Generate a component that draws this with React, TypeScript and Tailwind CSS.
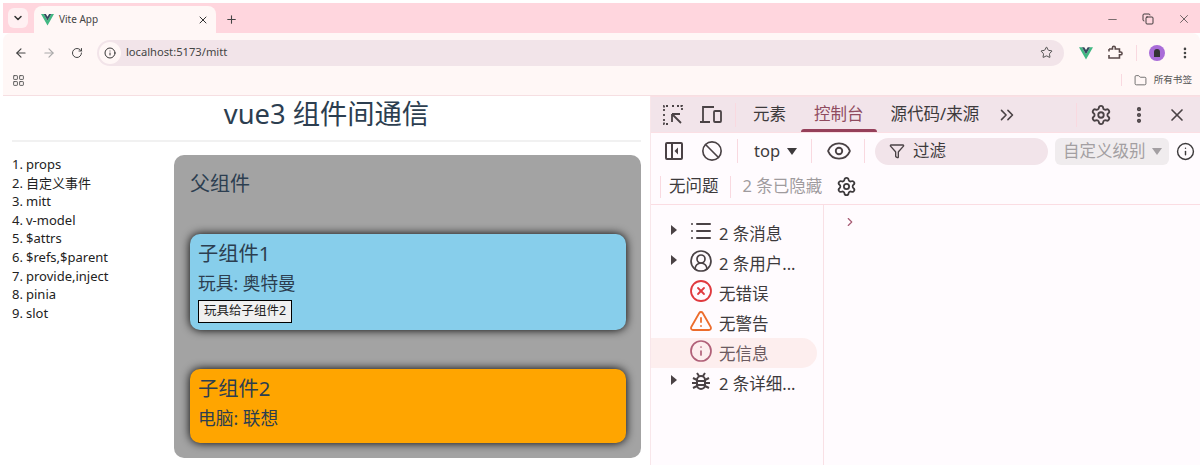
import {
  ArrowLeft,
  ArrowRight,
  Ban,
  ChevronDown,
  ChevronRight,
  ChevronsRight,
  CircleUserRound,
  Copy,
  EllipsisVertical,
  Eye,
  Folder,
  Funnel,
  Info,
  LayoutGrid,
  List,
  Minus,
  Plus,
  RotateCw,
  Settings,
  Star,
  TriangleAlert,
  CircleX,
  X,
} from "lucide-react";

const VueLogo = ({ size = 13 }: { size?: number }) => (
  <svg width={size} height={size} viewBox="0 0 24 22">
    <path d="M0 1h5l7 12 7-12h5L12 22z" fill="#41b883" />
    <path d="M5 1h4l3 5 3-5h4l-7 12z" fill="#35495e" />
  </svg>
);

const Sep = ({ className = "h-6" }: { className?: string }) => (
  <div className={`w-px bg-[#f9d9e0] ${className}`} />
);

const ExtensionIcon = () => (
  <svg className="ml-[15px]" width="15" height="15" viewBox="0 0 15 15" fill="none" stroke="#5a4a4a" strokeWidth="1.6">
    <path d="M1 4h3.5V2.6a1.4 1.4 0 0 1 2.8 0V4h4.2v3h1.2a1.4 1.4 0 0 1 0 2.8h-1.2V13H1v-3" />
    <path d="M1 4v2.6" />
  </svg>
);

const BugIcon = () => (
  <svg width="22" height="22" viewBox="0 0 22 22" fill="none" stroke="#4a4245" strokeWidth="2">
    <path d="M7 3l2 3M15 3l-2 3" />
    <rect x="7" y="6" width="8" height="13" rx="4" />
    <path d="M7 11h8M7 15h8M3 8l4 2M19 8l-4 2M2 13h5M20 13h-5M3 18l4-2M19 18l-4-2" />
  </svg>
);

const menu = [
  "props",
  "自定义事件",
  "mitt",
  "v-model",
  "$attrs",
  "$refs,$parent",
  "provide,inject",
  "pinia",
  "slot",
];

const BrowserChrome = () => {
  return (
    <div className="flex flex-col">
      <div className="flex h-[30px] items-end bg-[#ffd6de] pl-[5px]">
        <div className="mb-[5px] flex h-[20px] w-[20px] items-center justify-center rounded-md bg-[#fff0f2]">
          <ChevronDown size={12} strokeWidth={3} className="text-[#333]" />
        </div>
        <div className="ml-[6px] flex h-[27px] w-[182px] items-center rounded-t-lg bg-[#fff7f6] pl-[7px] pr-[7px]">
          <VueLogo />
          <span className="ml-[5px] flex-1 text-[10px] text-[#444]">Vite App</span>
          <X size={12} strokeWidth={2} className="text-[#333]" />
        </div>
        <Plus size={13} strokeWidth={2} className="mb-[7px] ml-[9px] text-[#444]" />
        <div className="flex-1" />
        <div className="mb-[7px] flex items-center gap-[23px] pr-[9px] text-[#333]">
          <Minus size={13} strokeWidth={1.2} />
          <Copy size={12} strokeWidth={1.7} className="text-[#222]" />
          <X size={14} strokeWidth={1.2} />
        </div>
      </div>
      <div className="flex h-[36px] items-center rounded-t-lg bg-[#fff7f6] pl-[11px] pr-[8px] pt-[3px]">
        <ArrowLeft size={14} strokeWidth={2} className="text-[#444]" />
        <ArrowRight size={14} strokeWidth={2} className="ml-[14px] text-[#aaa]" />
        <RotateCw size={12} strokeWidth={2} className="ml-[15px] text-[#444]" />
        <div className="ml-[14px] flex h-[26px] w-[970px] items-center rounded-full bg-[#f2e4e9] pl-[2px] pr-[11px]">
          <div className="flex h-[22px] w-[22px] items-center justify-center rounded-full bg-[#fff7f6]">
            <Info size={12} strokeWidth={2} className="text-[#333]" />
          </div>
          <span className="ml-[5px] flex-1 text-[11.2px] text-[#444]">localhost:5173/mitt</span>
          <Star size={13} strokeWidth={1.7} className="text-[#444]" />
        </div>
        <div className="ml-[15px]">
          <VueLogo size={14} />
        </div>
        <ExtensionIcon />
        <Sep className="ml-[13px] h-4" />
        <div className="ml-[12px] flex h-4 w-4 items-center justify-center rounded-full bg-[#a96cd8]">
          <div className="h-2 w-[6px] rounded-t-full bg-[#333]" />
        </div>
        <EllipsisVertical size={14} strokeWidth={2.5} className="ml-[13px] text-[#444]" />
      </div>
      <div className="flex h-[27px] items-center border-b border-[#f6dfe2] bg-[#fff7f6] pb-[4px] pl-[9px] pr-[8px]">
        <LayoutGrid size={13} strokeWidth={1.7} className="text-[#555]" />
        <div className="flex-1" />
        <Sep className="h-3" />
        <Folder size={13} strokeWidth={1.5} className="ml-[12px] text-[#555]" />
        <span className="ml-[7px] text-[9.6px] text-[#555]">所有书签</span>
      </div>
    </div>
  );
};

const Child = ({
  title,
  line,
  className,
  children,
}: {
  title: string;
  line: string;
  className: string;
  children?: React.ReactNode;
}) => {
  return (
    <div className={`rounded-[10px] px-2 pt-[4px] shadow-[0_0_10px_#000] ${className}`}>
      <h3 className="text-[20.3px] leading-[31px]">{title}</h3>
      <h4 className="mt-[1px] text-[17.7px] leading-[27px]">{line}</h4>
      {children}
    </div>
  );
};

const Page = () => {
  return (
    <div className="flex w-[647px] flex-col pl-[9px] pr-[9px] text-[#2c3e50]">
      <h2 className="text-center text-[27.3px] leading-[36px]">vue3 组件间通信</h2>
      <div className="mt-[8px] h-[2px] bg-[#f1f1f1]" />
      <div className="mt-[13px] flex">
        <ol className="w-[162px] text-[13px] leading-[18.6px] text-[#222]">
          {menu.map((item, i) => (
            <li key={item} className="flex">
              <span className="w-[14px] shrink-0">{i + 1}.</span>
              {item}
            </li>
          ))}
        </ol>
        <div className="h-[303px] flex-1 rounded-[10px] bg-[#a3a3a3] pl-[16px] pr-[15px] pt-[14px]">
          <h3 className="text-[20px] leading-[30px]">父组件</h3>
          <div className="mt-[35px] flex flex-col gap-[39px]">
            <Child title="子组件1" line="玩具: 奥特曼" className="bg-[#87ceeb] pb-[7px]">
              <button className="mt-[3px] block h-[23px] w-[94px] border border-black bg-[#f0f0f0] text-[12.5px] leading-none text-[#222]">
                玩具给子组件2
              </button>
            </Child>
            <Child title="子组件2" line="电脑: 联想" className="bg-[#ffa500] pb-[11px]" />
          </div>
        </div>
      </div>
    </div>
  );
};

const sidebar = [
  { label: "2 条消息", arrow: true, icon: <List size={24} strokeWidth={2} className="text-[#4a4245]" /> },
  { label: "2 条用户...", arrow: true, icon: <CircleUserRound size={24} strokeWidth={1.7} className="text-[#4a4245]" /> },
  { label: "无错误", icon: <CircleX size={24} strokeWidth={1.8} className="text-[#e0393e]" /> },
  { label: "无警告", icon: <TriangleAlert size={24} strokeWidth={1.8} className="text-[#ec6c2c]" /> },
  { label: "无信息", active: true, icon: <Info size={24} strokeWidth={1.7} className="text-[#b06078]" /> },
  { label: "2 条详细...", arrow: true, icon: <BugIcon /> },
];

const DevTools = () => {
  return (
    <div className="flex h-[369px] flex-1 flex-col border-l border-[#f8e6ea] bg-[#fffbfe] text-[#3d3a3c]">
      <div className="flex h-[37px] items-center border-y border-[#fbdfe4] bg-[#f2e4ea] pl-[12px] pr-[13px]">
        <svg width="20" height="20" viewBox="0 0 20 20" fill="none" stroke="#4a4245" strokeWidth="1.8">
          <path d="M1 6V1h5M9 1h2M14 1h5v5M1 9v2M1 14v5h5" strokeDasharray="2 1.5" />
          <path d="M9 9h8M9 9v8M9 9l9 9" />
        </svg>
        <svg className="ml-[17px]" width="22" height="20" viewBox="0 0 22 20" fill="none" stroke="#4a4245" strokeWidth="1.8">
          <path d="M3 16V2h11M0 17h10" />
          <rect x="14" y="6" width="7" height="11" rx="1" />
        </svg>
        <Sep className="ml-[13px] h-6" />
        <span className="ml-[17px] text-[16.5px]">元素</span>
        <div className="relative ml-[28px] flex h-full items-center">
          <span className="text-[16.5px] text-[#8f4b5f]">控制台</span>
          <div className="absolute -left-[13px] -right-[13px] bottom-0 h-[3px] rounded-t bg-[#96405a]" />
        </div>
        <span className="ml-[27px] text-[16.5px]">源代码/来源</span>
        <ChevronsRight size={22} strokeWidth={1.7} className="ml-[17px] text-[#4a4245]" />
        <div className="flex-1" />
        <Sep className="h-6" />
        <Settings size={22} strokeWidth={2} className="ml-[13px] text-[#4a4245]" />
        <EllipsisVertical size={20} strokeWidth={3} className="ml-[17px] text-[#4a4245]" />
        <X size={20} strokeWidth={2} className="ml-[18px] text-[#4a4245]" />
      </div>
      <div className="flex h-[36px] items-center pl-[13px] pr-[3px]">
        <svg width="20" height="20" viewBox="0 0 20 20" fill="none" stroke="#4a4245" strokeWidth="2">
          <rect x="2" y="2" width="16" height="16" rx="1" />
          <path d="M8 2v16" />
          <path d="M14 6.5v7L10.5 10z" fill="#4a4245" stroke="none" />
        </svg>
        <Ban size={22} strokeWidth={1.8} className="ml-[17px] text-[#4a4245]" />
        <Sep className="ml-[14px] h-6" />
        <span className="ml-[16px] text-[16.5px]">top</span>
        <span className="ml-[7px] h-0 w-0 border-x-[5px] border-t-[7px] border-x-transparent border-t-[#3d3a3c]" />
        <Sep className="ml-[14px] h-6" />
        <Eye size={26} strokeWidth={1.7} className="ml-[14px] text-[#4a4245]" />
        <Sep className="ml-[12px] h-6" />
        <div className="ml-[10px] flex h-[27px] w-[173px] items-center rounded-full bg-[#f2e4ea] pl-[14px]">
          <Funnel size={16} strokeWidth={2} className="text-[#4a4245]" />
          <span className="ml-[8px] text-[16.5px]">过滤</span>
        </div>
        <div className="ml-[7px] flex h-[27px] w-[114px] items-center rounded-md bg-[#f0ecee] pl-[8px] text-[#a39fa2]">
          <span className="text-[16.5px]">自定义级别</span>
          <span className="ml-[6px] h-0 w-0 border-x-[5px] border-t-[7px] border-x-transparent border-t-[#a39fa2]" />
        </div>
        <Info size={19} strokeWidth={1.8} className="ml-[7px] text-[#3d3a3c]" />
      </div>
      <div className="flex h-[36px] items-center border-b border-[#fbdde3] pl-[9px]">
        <Sep className="h-[22px]" />
        <span className="ml-[8px] text-[16.5px]">无问题</span>
        <Sep className="ml-[11px] h-[22px]" />
        <span className="ml-[12px] text-[16.5px] text-[#9f9b9e]">2 条已隐藏</span>
        <Settings size={21} strokeWidth={2} className="ml-[14px] text-[#3d3a3c]" />
      </div>
      <div className="flex flex-1">
        <div className="flex w-[173px] flex-col border-r border-[#f9e0e5] pt-[13px]">
          {sidebar.map((row) => (
            <div
              key={row.label}
              className={`flex h-[30px] w-[166px] items-center rounded-r-full pl-[20px] ${row.active ? "bg-[#fdeeee]" : ""}`}
            >
              <span className="flex w-[18px] shrink-0">
                {row.arrow && (
                  <span className="-mt-[6px] h-0 w-0 border-y-[5px] border-l-[6px] border-y-transparent border-l-[#4a4245]" />
                )}
              </span>
              <span className="-mt-[5px] flex w-[24px] shrink-0 justify-center">{row.icon}</span>
              <span className={`ml-[6px] mt-[3px] whitespace-nowrap text-[16.5px] ${row.active ? "text-[#6b5a60]" : ""}`}>
                {row.label}
              </span>
            </div>
          ))}
        </div>
        <div className="pl-[19px] pt-[10px]">
          <ChevronRight size={14} strokeWidth={2} className="text-[#a85c74]" />
        </div>
      </div>
    </div>
  );
};

const App = () => {
  return (
    <div className="h-[473px] w-[1204px] overflow-hidden bg-white pl-[3px] pr-[4px] pt-[3px] font-['Noto_Sans','Noto_Sans_CJK_SC',sans-serif]">
      <BrowserChrome />
      <div className="flex">
        <Page />
        <DevTools />
      </div>
    </div>
  );
};

export default App;
